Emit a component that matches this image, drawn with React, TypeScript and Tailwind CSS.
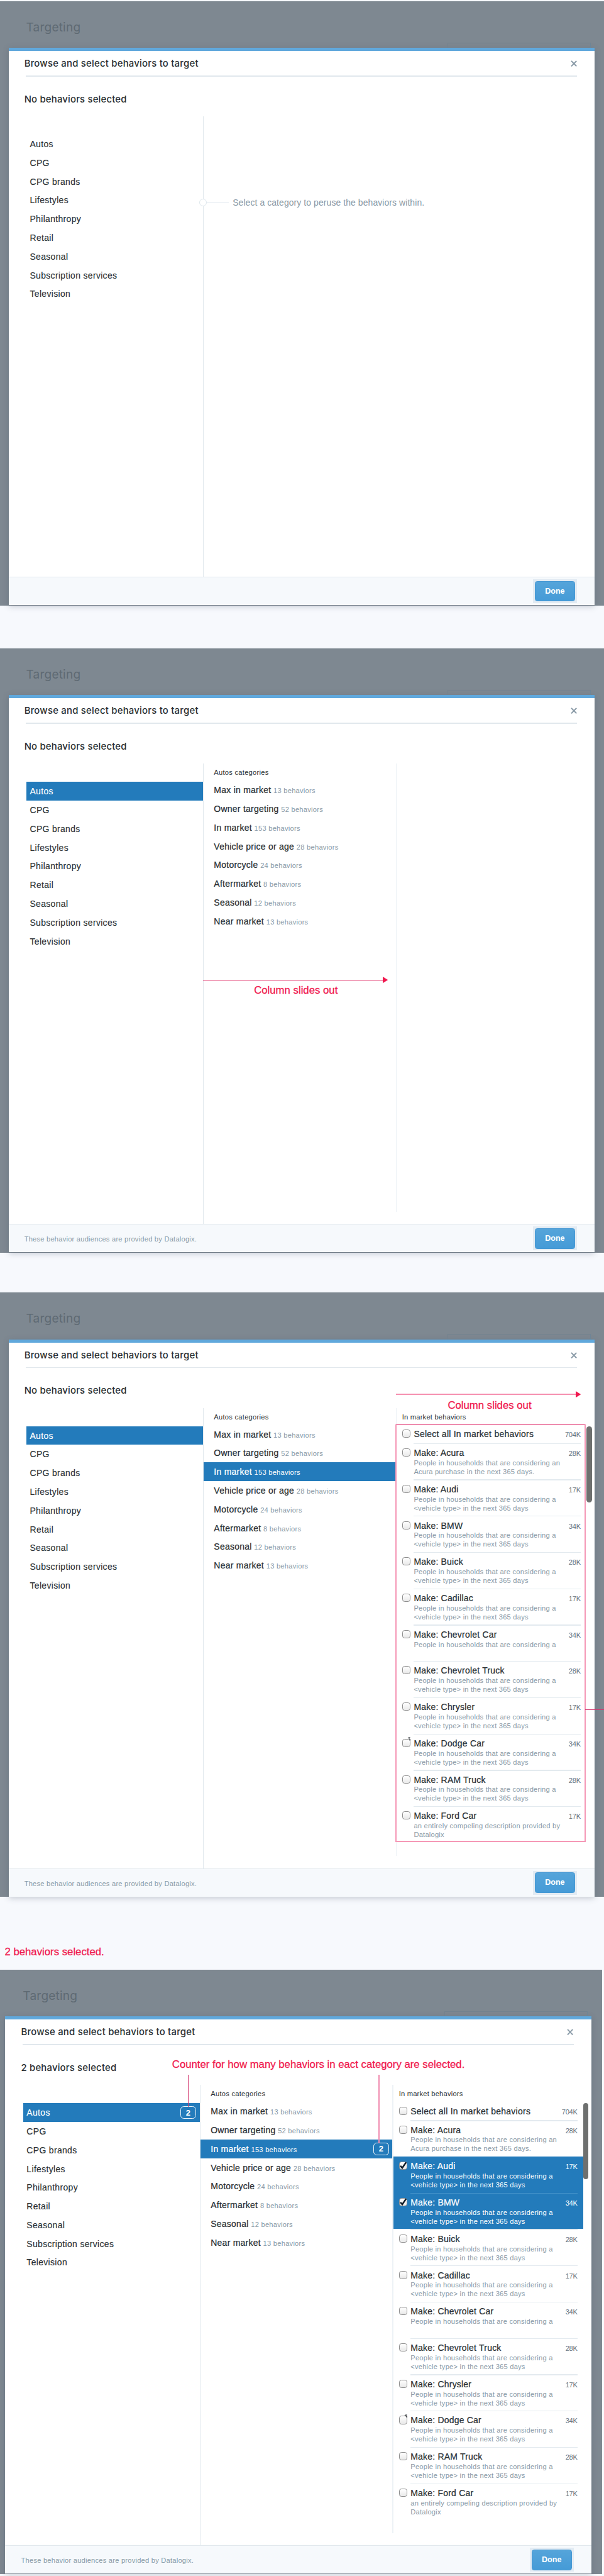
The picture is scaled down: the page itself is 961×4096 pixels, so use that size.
import type { ReactNode } from "react";

type Behavior = { name: string; count: string; lines: string[]; nub?: boolean };

const topCategories = [
  "Autos",
  "CPG",
  "CPG brands",
  "Lifestyles",
  "Philanthropy",
  "Retail",
  "Seasonal",
  "Subscription services",
  "Television",
];

const autosCategories = [
  { name: "Max in market", count: 13 },
  { name: "Owner targeting", count: 52 },
  { name: "In market", count: 153 },
  { name: "Vehicle price or age", count: 28 },
  { name: "Motorcycle", count: 24 },
  { name: "Aftermarket", count: 8 },
  { name: "Seasonal", count: 12 },
  { name: "Near market", count: 13 },
];

const generic = ["People in households that are considering a", "<vehicle type> in the next 365 days"];

const behaviors: Behavior[] = [
  { name: "Make: Acura", count: "28K", lines: ["People in households that are considering an", "Acura purchase in the next 365 days."] },
  { name: "Make: Audi", count: "17K", lines: generic },
  { name: "Make: BMW", count: "34K", lines: generic },
  { name: "Make: Buick", count: "28K", lines: generic },
  { name: "Make: Cadillac", count: "17K", lines: generic },
  { name: "Make: Chevrolet Car", count: "34K", lines: generic.slice(0, 1) },
  { name: "Make: Chevrolet Truck", count: "28K", lines: generic },
  { name: "Make: Chrysler", count: "17K", lines: generic },
  { name: "Make: Dodge Car", count: "34K", lines: generic, nub: true },
  { name: "Make: RAM Truck", count: "28K", lines: generic },
  { name: "Make: Ford Car", count: "17K", lines: ["an entirely compeling description provided by", "Datalogix"] },
];

function Counter({ value }: { value: number }) {
  return (
    <span className="mr-[6px] flex h-[21px] w-[27px] items-center justify-center rounded-[6px] border-[1.5px] border-white/90 text-[14px] font-bold leading-none text-white">
      {value}
    </span>
  );
}

function Checkbox({ checked = false, nub = false }: { checked?: boolean; nub?: boolean }) {
  return (
    <span className="relative block h-[14px] w-[14px] shrink-0 rounded-[4px] border border-[#8f8f8f] bg-linear-to-b from-white to-[#e9e9e9]">
      {checked && (
        <svg viewBox="0 0 14 14" className="absolute -left-px -top-px h-[14px] w-[14px]">
          <path d="M2.2 7.2 L5.4 11 L12 1.2" fill="none" stroke="#0d1a26" strokeWidth="2.7" />
        </svg>
      )}
      {nub && (
        <svg viewBox="0 0 6 7" className="absolute -right-[2px] -top-[4px] h-[7px] w-[6px]">
          <path d="M1 2.2 L3 1 L5 1.3 M3.2 3 L4.8 4 L4.6 6" fill="none" stroke="#33383c" strokeWidth="1.3" />
        </svg>
      )}
    </span>
  );
}

function TopCategories({ selected, counter }: { selected?: string; counter?: number }) {
  return (
    <div className="flex h-full">
      <ul className="w-[332px] pl-[30.5px] pt-[31px]">
        {topCategories.map((name) => (
          <li
            key={name}
            className={
              name === selected
                ? "flex h-8 items-center justify-between bg-[#237bbb] pl-[6px] text-[15px] text-white"
                : "flex h-8 items-center justify-between pl-[6px] text-[15px] text-[#292f33]"
            }
          >
            <span className="pt-px tracking-[0.36px] [-webkit-text-stroke:0.15px_currentColor]">{name}</span>
            {name === selected && counter !== undefined && <Counter value={counter} />}
          </li>
        ))}
      </ul>
      <div className="h-full w-px bg-[#e1e8ed]" />
    </div>
  );
}

function SubCategories({ selected, counter }: { selected?: string; counter?: number }) {
  return (
    <div className="flex h-[765px]">
      <div className="w-[328.5px]">
        <h3 className="h-[29px] pl-[18px] text-[12px] leading-[32px] tracking-[0.27px] text-[#292f33]">Autos categories</h3>
        <ul>
          {autosCategories.map(({ name, count }) => {
            const active = name === selected;
            return (
              <li
                key={name}
                className={
                  active
                    ? "flex h-8 items-center justify-between bg-[#237bbb] pl-[18px] text-white"
                    : "flex h-8 items-center justify-between pl-[18px] text-[#292f33]"
                }
              >
                <span className="flex items-baseline gap-[4px] pt-px">
                  <span className="text-[15px] tracking-[0.28px] [-webkit-text-stroke:0.25px_currentColor]">{name}</span>
                  <span className={active ? "text-[12px] tracking-[0.25px] text-white" : "text-[12px] tracking-[0.25px] text-[#8899a6]"}>
                    {count} behaviors
                  </span>
                </span>
                {active && counter !== undefined && <Counter value={counter} />}
              </li>
            );
          })}
        </ul>
      </div>
      <div className="w-[2px] bg-[#edf2f6]" />
    </div>
  );
}

function BehaviorList({ checked = [] }: { checked?: string[] }) {
  return (
    <div className="w-[333px]">
      <h3 className="h-[29px] pl-[9px] text-[12px] leading-[32px] tracking-[0.22px] text-[#292f33]">In market behaviors</h3>
      <div className="flex">
        <div className="w-[324px]">
          <div className="flex h-[31px] pl-[9px] pr-[10px] pt-[8px]">
            <Checkbox />
            <div className="ml-[6px] flex flex-1 items-baseline justify-between leading-[17px]">
              <span className="text-[15px] tracking-[0.28px] text-[#292f33] [-webkit-text-stroke:0.25px_currentColor]">
                Select all In market behaviors
              </span>
              <span className="text-[12px] tracking-[-0.3px] text-[#66757f]">704K</span>
            </div>
          </div>
          {behaviors.map(({ name, count, lines, nub }, index) => {
            const on = checked.includes(name);
            const afterOn = index > 0 && checked.includes(behaviors[index - 1].name);
            return (
              <div key={name} className={on ? "flex h-[62px] bg-[#237bbb] pl-[9px] pr-[10px]" : "flex h-[62px] pl-[9px] pr-[10px]"}>
                <div className="pt-[9px]">
                  <Checkbox checked={on} nub={nub} />
                </div>
                <div className="ml-[6px] flex-1">
                  <div className={on ? (afterOn ? "h-[1.4px] bg-[#4392ca]" : "h-[1.4px]") : "h-[1.4px] bg-[#e3eaef]"} />
                  <div className="mt-[7.6px] flex items-baseline justify-between leading-[17px]">
                    <span
                      className={
                        on
                          ? "text-[15px] tracking-[0.24px] text-white [-webkit-text-stroke:0.25px_currentColor]"
                          : "text-[15px] tracking-[0.24px] text-[#292f33] [-webkit-text-stroke:0.25px_currentColor]"
                      }
                    >
                      {name}
                    </span>
                    <span className={on ? "text-[12px] tracking-[-0.3px] text-white" : "text-[12px] tracking-[-0.3px] text-[#66757f]"}>
                      {count}
                    </span>
                  </div>
                  {lines.map((line) => (
                    <p
                      key={line}
                      className={
                        on
                          ? "whitespace-nowrap text-[12px] leading-[15px] tracking-[0.23px] text-white"
                          : "whitespace-nowrap text-[12px] leading-[15px] tracking-[0.23px] text-[#8899a6]"
                      }
                    >
                      {line}
                    </p>
                  ))}
                </div>
              </div>
            );
          })}
        </div>
        <div className="mt-[2px] h-[130px] w-[9px] rounded-full bg-[#6e706f]" />
      </div>
    </div>
  );
}

function Screen({
  status,
  footnote,
  children,
  notes,
}: {
  status: string;
  footnote?: string;
  children: ReactNode;
  notes?: ReactNode;
}) {
  return (
    <section className="relative h-[1032px] w-[1034px] shrink-0 bg-[#7e8891] pl-[14.5px]">
      <div className="flex h-[80px] w-[1017.5px] items-end justify-between">
        <h1 className="mb-[21px] ml-[30px] font-[Inter,sans-serif] text-[20.5px] leading-[28px] tracking-[0.2px] text-[#5f6a73]">Targeting</h1>
        <div className="mr-[23px] h-[9px] w-[244px] border border-b-0 border-[#73828e] border-r-[#6f8596]" />
      </div>
      <div className="flex h-[951px] w-[1001px] flex-col bg-white shadow-[0_2px_10px_rgba(60,75,95,0.28)]">
        <div className="h-[5px] bg-[#60a8dc]" />
        <header className="mx-[30px] flex h-[42px] items-center justify-between pt-[2px]">
          <h2 className="-ml-[3px] whitespace-nowrap font-[Inter,sans-serif] text-[16px] font-medium leading-5 tracking-[0.24px] text-[#292f33]">
            Browse and select behaviors to target
          </h2>
          <svg viewBox="0 0 12 12" className="h-[11px] w-[11px]">
            <path d="M1.2 1 L10.8 11 M10.8 1 L1.2 11" stroke="#8899a6" strokeWidth="2.3" />
          </svg>
        </header>
        <div className="mx-[30px] h-[2px] bg-[#e1e8ed]" />
        <p className="flex h-[68px] items-center pl-[27px] pt-[9px] font-[Inter,sans-serif] text-[16px] font-medium tracking-[0.2px] text-[#292f33]">
          {status}
        </p>
        <div className="flex h-[786px]">{children}</div>
        <footer className="flex h-[48px] items-center justify-between border-t border-[#e1e8ed] bg-[#f6f9fc] pl-[27px] pr-[30px]">
          <span className="pt-[3px] text-[12px] tracking-[0.23px] text-[#8899a6]">{footnote}</span>
          <button className="flex h-[41px] w-[75px] items-center justify-center bg-[#e2ebf3]">
            <span className="flex h-[35px] w-[69px] items-center justify-center rounded-[4px] border border-[#4598d4] bg-linear-to-b from-[#55a4da] to-[#459bd7] text-[13.5px] font-bold text-white">
              Done
            </span>
          </button>
        </footer>
      </div>
      {notes}
    </section>
  );
}

function Prompt() {
  return (
    <div className="-ml-[7px] mt-[131px] flex h-[32px] items-center">
      <span className="h-[13px] w-[13px] rounded-full border border-[#dfe8ee] bg-white" />
      <span className="h-px w-[37px] bg-[#dfe8ee]" />
      <span className="ml-[7px] text-[15px] tracking-[0.09px] text-[#8899a6]">Select a category to peruse the behaviors within.</span>
    </div>
  );
}

function ArrowHead() {
  return (
    <svg viewBox="0 0 9 11" className="h-[11px] w-[9px]">
      <path d="M0 0 L9 5.5 L0 11 Z" fill="#f0184e" />
    </svg>
  );
}

export default function App() {
  return (
    <div className="h-[4096px] w-[961px] overflow-hidden bg-[#f7f9fd]">
      <main className="flex h-[4398px] w-[1032px] flex-col overflow-hidden pt-[2px] font-['Liberation_Sans',Arial,sans-serif] [zoom:0.9313]">
        <Screen status="No behaviors selected">
          <TopCategories />
          <Prompt />
        </Screen>

        <div className="h-[73px] shrink-0" />

        <Screen
          status="No behaviors selected"
          footnote="These behavior audiences are provided by Datalogix."
          notes={
            <div className="absolute left-[347px] top-[561px] w-[316px]">
              <div className="flex items-center">
                <div className="h-[1.4px] flex-1 bg-[#e02c66]" />
                <ArrowHead />
              </div>
              <p className="mt-[3px] pl-[87px] text-[18px] leading-[20px] text-[#f0184e] [-webkit-text-stroke:0.3px_currentColor]">
                Column slides out
              </p>
            </div>
          }
        >
          <TopCategories selected="Autos" />
          <SubCategories />
        </Screen>

        <div className="h-[68px] shrink-0" />

        <Screen
          status="No behaviors selected"
          footnote="These behavior audiences are provided by Datalogix."
          notes={
            <>
              <div className="absolute left-[676px] top-[168px] w-[316.5px]">
                <div className="flex items-center">
                  <div className="h-[2px] flex-1 bg-[#f690b0]" />
                  <ArrowHead />
                </div>
                <p className="mt-[4px] pl-[89px] text-[18px] leading-[20px] text-[#f0184e] [-webkit-text-stroke:0.3px_currentColor]">
                  Column slides out
                </p>
              </div>
              <div className="absolute left-[675.5px] top-[225px] h-[713px] w-[325.5px] border-[2.2px] border-t border-[#f598b6] border-t-[#e0306e]" />
              <div className="absolute left-[1000px] top-[712px] h-px w-[32px] bg-[#d2346d]" />
            </>
          }
        >
          <TopCategories selected="Autos" />
          <SubCategories selected="In market" />
          <BehaviorList />
        </Screen>

        <div className="flex h-[124px] shrink-0 items-center pl-[8px] pt-[65px] text-[18px] leading-[20px] text-[#f0184e] [-webkit-text-stroke:0.3px_currentColor]">
          2 behaviors selected.
        </div>

        <div className="-ml-[5.5px] w-[1034px] shrink-0">
          <Screen
            status="2 behaviors selected"
            footnote="These behavior audiences are provided by Datalogix."
            notes={
              <>
                <p className="absolute left-[299.5px] top-[153px] whitespace-nowrap text-[18px] leading-[20px] text-[#f0184e] [-webkit-text-stroke:0.3px_currentColor]">
                  Counter for how many behaviors in eact category are selected.
                </p>
                <div className="absolute left-[327px] top-[179px] h-[55px] w-px bg-[#d2346d]" />
                <div className="absolute left-[652px] top-[179px] h-[117px] w-[2px] bg-[#f08cb0]" />
              </>
            }
          >
            <TopCategories selected="Autos" counter={2} />
            <SubCategories selected="In market" counter={2} />
            <BehaviorList checked={["Make: Audi", "Make: BMW"]} />
          </Screen>
        </div>
      </main>
    </div>
  );
}
